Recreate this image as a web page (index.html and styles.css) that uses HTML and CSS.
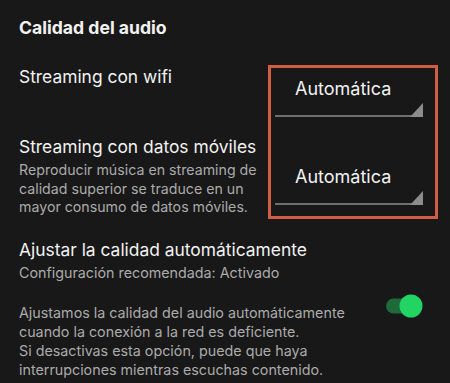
FILE: index.html
```html
<!DOCTYPE html>
<html lang="es">
<head>
<meta charset="utf-8">
<title>Calidad del audio</title>
<link rel="stylesheet" href="styles.css">
</head>
<body>
<main class="screen">
  <h1 class="title">Calidad del audio</h1>
  <section class="streaming">
    <div class="labels">
      <div class="label wifi">Streaming con wifi</div>
      <div class="label data">Streaming con datos móviles</div>
      <p class="desc">Reproducir música en streaming de<br>calidad superior se traduce en un<br>mayor consumo de datos móviles.</p>
    </div>
    <div class="selects">
      <div class="select first">
        <span class="value">Automática</span>
        <span class="underline"><span class="corner"></span></span>
      </div>
      <div class="select second">
        <span class="value">Automática</span>
        <span class="underline"><span class="corner"></span></span>
      </div>
    </div>
  </section>
  <section class="auto">
    <div class="label">Ajustar la calidad automáticamente</div>
    <div class="sub">Configuración recomendada: Activado</div>
    <div class="toggle-row">
      <p class="desc">Ajustamos la calidad del audio automáticamente<br>cuando la conexión a la red es deficiente.<br>Si desactivas esta opción, puede que haya<br>interrupciones mientras escuchas contenido.</p>
      <svg class="toggle" width="37" height="24" viewBox="0 0 37 24"><rect x="0" y="4.5" width="27" height="15" rx="7.5" fill="#1f6a3b"/><circle cx="25" cy="12" r="11.5" fill="#22d461"/></svg>
    </div>
  </section>
</main>
</body>
</html>
```
FILE: styles.css
```css
html, body {
  margin: 0;
  padding: 0;
  background: #181818;
}
.screen {
  width: 450px;
  height: 383px;
  box-sizing: border-box;
  padding: 0 12px 0 19px;
  font-family: Inter, "Liberation Sans", sans-serif;
  color: #f2f2f2;
  overflow: hidden;
}
.title {
  margin: 0;
  padding-top: 16px;
  font-size: 17.6px;
  line-height: 24px;
  font-weight: 700;
}
.streaming {
  display: grid;
  grid-template-columns: 1fr 170px;
  margin-top: 25px;
}
.label {
  font-size: 17.4px;
  line-height: 24px;
  font-weight: 400;
}
.label.data {
  margin-top: 46px;
}
.desc {
  margin: 2px 0 0;
  font-size: 14.2px;
  line-height: 18.5px;
  color: #ababab;
}
.selects {
  border: 3px solid #d05e47;
  display: flex;
  flex-direction: column;
  height: 154px;
  box-sizing: border-box;
}
.select {
  display: flex;
  flex-direction: column;
  padding: 0 12px 0 4px;
}
.select.first {
  padding-top: 9px;
}
.select.second {
  padding-top: 48px;
}
.value {
  font-size: 18px;
  line-height: 24px;
  padding-left: 20px;
}
.underline {
  display: flex;
  justify-content: flex-end;
  align-items: flex-end;
  height: 14px;
  border-bottom: 2px solid #6e6e6e;
}
.corner {
  width: 13px;
  height: 14px;
  background: #8c8c8c;
  clip-path: polygon(100% 0, 100% 100%, 0 100%);
  margin-bottom: -2px;
}
.auto {
  margin-top: 19px;
}
.sub {
  margin-top: 1px;
  font-size: 14.3px;
  line-height: 20px;
  color: #ababab;
}
.toggle-row {
  display: flex;
  justify-content: space-between;
  align-items: flex-start;
  margin-top: 20px;
  padding-right: 15px;
}
.toggle-row .desc {
  margin: 0;
  font-size: 14.3px;
  line-height: 19px;
}
.toggle {
  display: block;
  margin-top: -9px;
}
```
